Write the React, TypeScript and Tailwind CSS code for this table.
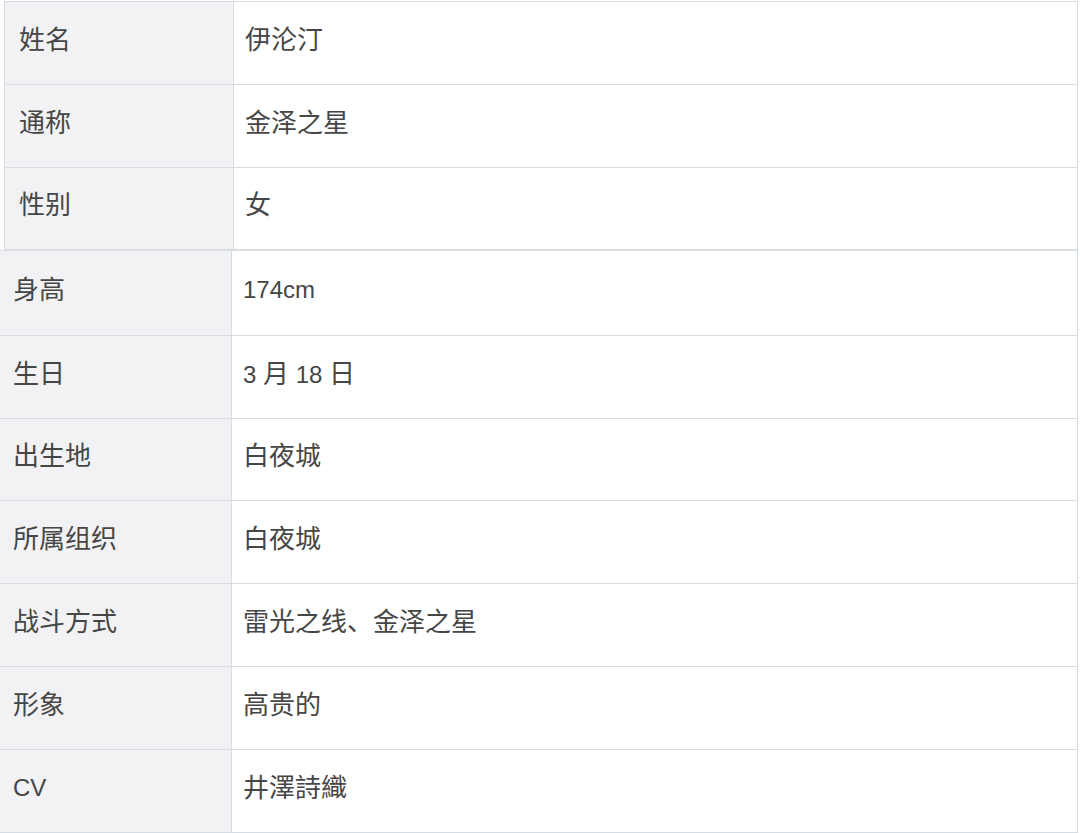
import React from "react";

const FONT = "font-['Liberation_Sans','Noto_Sans_CJK_SC',sans-serif]";

type Row = { k: React.ReactNode; v: React.ReactNode; h: string; last?: boolean };

const L = ({ children }: { children: React.ReactNode }) => (
  <span className="text-[24px]">{children}</span>
);

const top: Row[] = [
  { k: "姓名", v: "伊沦汀", h: "h-[83px]" },
  { k: "通称", v: "金泽之星", h: "h-[83px]" },
  { k: "性别", v: "女", h: "h-[81px]", last: true },
];

const bottom: Row[] = [
  { k: "身高", v: <L>174cm</L>, h: "h-[85px]" },
  {
    k: "生日",
    v: (
      <span className="whitespace-pre">
        <L>3 </L>月<L> 18 </L>日
      </span>
    ),
    h: "h-[83px]",
  },
  { k: "出生地", v: "白夜城", h: "h-[82px]" },
  { k: "所属组织", v: "白夜城", h: "h-[83px]" },
  { k: "战斗方式", v: "雷光之线、金泽之星", h: "h-[83px]" },
  { k: "形象", v: "高贵的", h: "h-[83px]" },
  { k: "CV", v: "井澤詩織", h: "h-[83px]" },
];

export default function App() {
  return (
    <div className={`w-[1080px] h-[833px] overflow-hidden bg-white text-[#464646] text-[26px] leading-none ${FONT}`}>
      <div className="ml-[4px] mt-px w-[1074px] border border-[#d6dee4]">
        {top.map((r, i) => (
          <div key={i} className={`flex ${r.h} ${r.last ? "" : "border-b border-[#d6dee4]"}`}>
            <div className="w-[229px] shrink-0 bg-[#f2f2f4] border-r border-[#d6dee4] pl-[14px] flex items-center pb-[7px]">
              {r.k}
            </div>
            <div className="flex-1 pl-[11px] flex items-center pb-[7px]">{r.v}</div>
          </div>
        ))}
      </div>
      <div className="ml-[-1px] w-[1079px] border-t border-x border-[#d6dee4]">
        {bottom.map((r, i) => (
          <div key={i} className={`flex ${r.h} border-b border-[#d6dee4]`}>
            <div className="w-[232px] shrink-0 bg-[#f2f2f4] border-r border-[#d6dee4] pl-[13px] flex items-center pb-[7px]">
              {r.k === "CV" ? <L>CV</L> : r.k}
            </div>
            <div className="flex-1 pl-[11px] flex items-center pb-[7px]">{r.v}</div>
          </div>
        ))}
      </div>
    </div>
  );
}
